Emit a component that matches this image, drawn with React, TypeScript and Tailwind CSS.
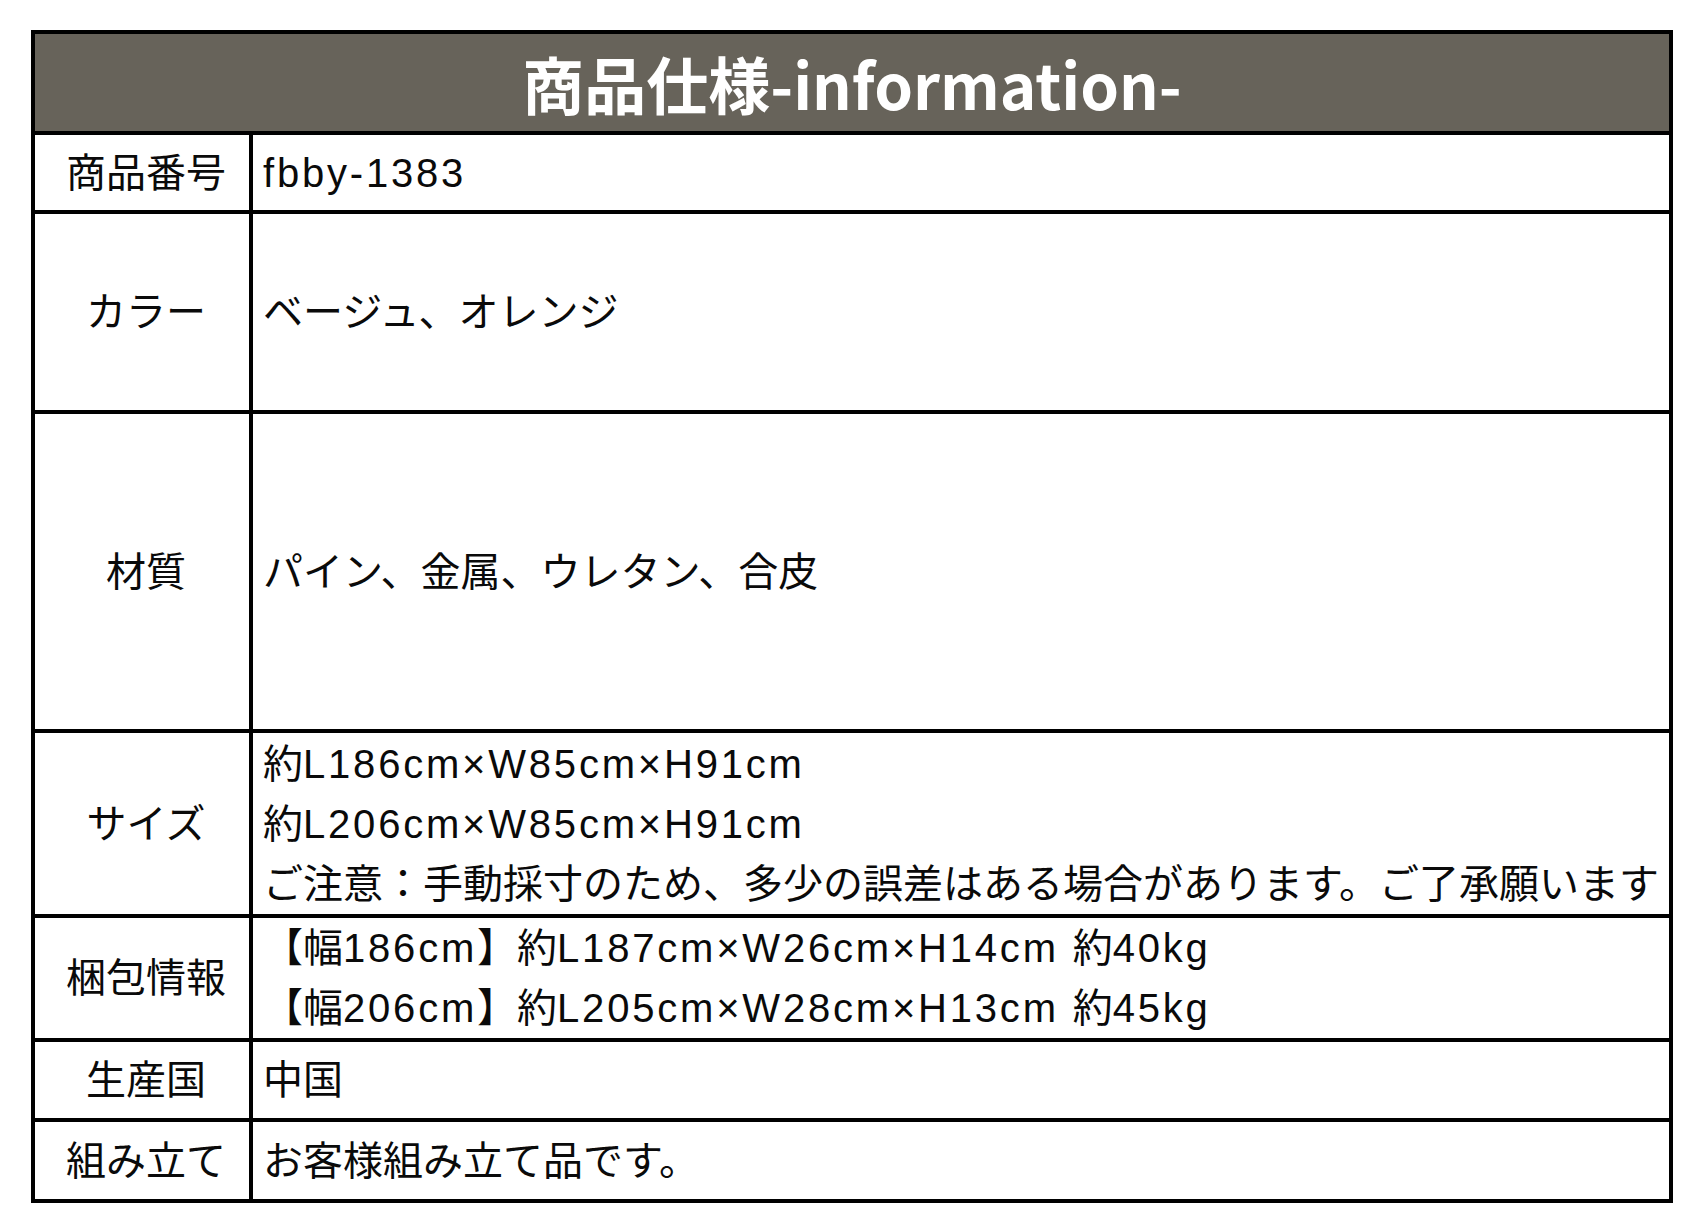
import React from 'react';

interface SpecRow {
  label: string;
  lines: string[];
  h: string;
}

// 商品仕様の行データ
const rows: SpecRow[] = [
  { label: '商品番号', lines: ['fbby-1383'], h: 'h-[79px]' },
  { label: 'カラー', lines: ['ベージュ、オレンジ'], h: 'h-[200px]' },
  { label: '材質', lines: ['パイン、金属、ウレタン、合皮'], h: 'h-[319px]' },
  {
    label: 'サイズ',
    lines: [
      '約L186cm×W85cm×H91cm',
      '約L206cm×W85cm×H91cm',
      'ご注意：手動採寸のため、多少の誤差はある場合があります。ご了承願います',
    ],
    h: 'h-[185px]',
  },
  {
    label: '梱包情報',
    lines: ['【幅186cm】約L187cm×W26cm×H14cm 約40kg', '【幅206cm】約L205cm×W28cm×H13cm 約45kg'],
    h: 'h-[124px]',
  },
  { label: '生産国', lines: ['中国'], h: 'h-[80px]' },
  { label: '組み立て', lines: ['お客様組み立て品です。'], h: 'h-[81px]' },
];

// 英数字の部分だけ字間を広げる
const renderLine = (line: string) =>
  line.split(/([A-Za-z0-9×\- ]+)/).map((part, i) =>
    /^[A-Za-z0-9×\- ]+$/.test(part) ? (
      <span key={i} className="tracking-[2.8px]">
        {part}
      </span>
    ) : (
      <span key={i}>{part}</span>
    )
  );

const App: React.FC = () => {
  return (
    <div className="w-[1704px] h-[1232px] bg-white pt-[30px] pl-[31px] font-['Liberation_Sans','Noto_Sans_CJK_JP',sans-serif] text-[#0a0a0a]">
      <div className="w-[1642px] border-4 border-black">
        <div className="h-[97px] bg-[#67635a] flex items-center justify-center">
          <h1 className="text-white text-[62px] font-bold leading-none font-['Noto_Sans_CJK_JP',sans-serif]">
            商品仕様-information-
          </h1>
        </div>
        {rows.map((row) => (
          <div key={row.label} className={`flex border-t-4 border-black ${row.h}`}>
            <div className="w-[218px] shrink-0 border-r-4 border-black pl-[8px] flex items-center justify-center text-[40px] leading-none">
              {row.label}
            </div>
            <div className="flex-1 pl-[10px] flex flex-col justify-center text-[40px] leading-[60px] whitespace-nowrap">
              {row.lines.map((line) => (
                <div key={line}>{renderLine(line)}</div>
              ))}
            </div>
          </div>
        ))}
      </div>
    </div>
  );
};

export default App;
